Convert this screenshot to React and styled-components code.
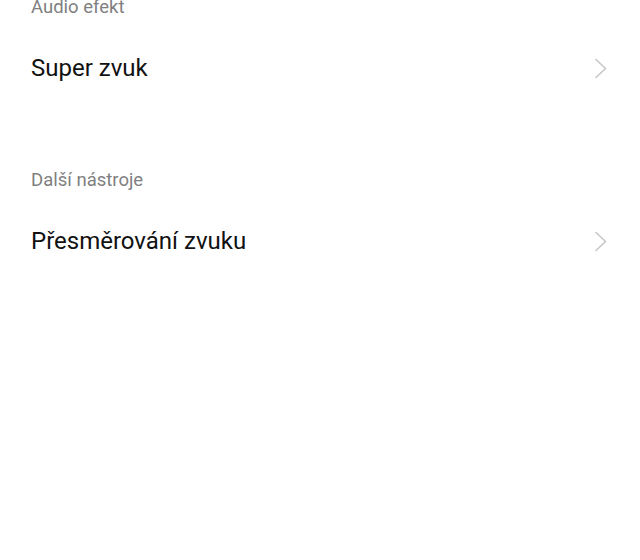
import React from "react";
import styled, { createGlobalStyle } from "styled-components";

const GlobalStyle = createGlobalStyle`
    html, body {
        margin: 0;
        padding: 0;
        background: #ffffff;
        font-family: Roboto, "Noto Sans", sans-serif;
        overflow: hidden;
    }
`;

const Page = styled.div`
    width: 640px;
    height: 560px;
    background: #ffffff;
    overflow: hidden;
`;

const SectionTitle = styled.div`
    padding: ${(p) => (p.$first ? "0" : "61px")} 31px 10px;
    margin-top: ${(p) => (p.$first ? "-4px" : "0")};
    font-size: 18.5px;
    line-height: 22px;
    color: #808080;
`;

const Row = styled.div`
    height: 80px;
    display: flex;
    align-items: center;
    justify-content: space-between;
    padding: 0 33px 0 31px;
`;

const RowLabel = styled.span`
    font-size: 24px;
    color: #111111;
`;

const Chevron = () => (
    <svg width="12" height="21" viewBox="0 0 12 21" fill="none">
        <path
            d="M1 1.5 L10.5 10.5 L1 19.5"
            stroke="#c6c6c6"
            strokeWidth="1.6"
            strokeLinecap="round"
            strokeLinejoin="round"
        />
    </svg>
);

const sections = [
    { title: "Audio efekt", items: ["Super zvuk"] },
    { title: "Další nástroje", items: ["Přesměrování zvuku"] },
];

const App = () => {
    return (
        <Page>
            <GlobalStyle />
            {sections.map((s, i) => (
                <div key={s.title}>
                    <SectionTitle $first={i === 0}>{s.title}</SectionTitle>
                    {s.items.map((item) => (
                        <Row key={item}>
                            <RowLabel>{item}</RowLabel>
                            <Chevron />
                        </Row>
                    ))}
                </div>
            ))}
        </Page>
    );
};

export default App;
